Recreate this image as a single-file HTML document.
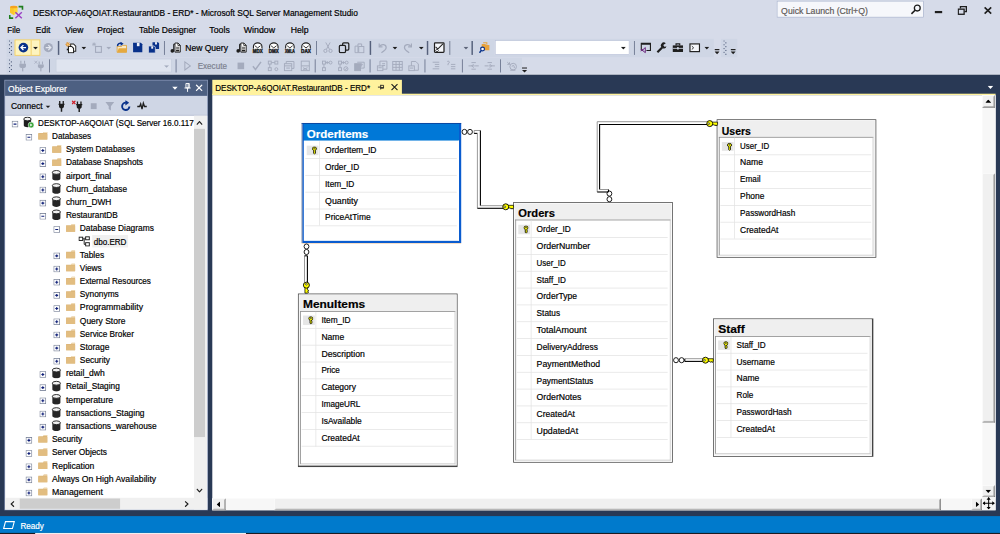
<!DOCTYPE html><html><head><meta charset="utf-8"><title>SSMS</title><style>
html,body{margin:0;padding:0;background:#d6dbe9;overflow:hidden;}
body{width:1000px;height:534px;position:relative;font-family:"Liberation Sans",sans-serif;}
#st{position:absolute;left:0;top:0;width:1366px;height:730px;transform:scale(0.732064);transform-origin:0 0;font-size:11.5px;color:#000;}
#st div,#st span,#st svg{position:absolute;box-sizing:border-box;}
.t{white-space:pre;line-height:16px;height:16px;transform-origin:0 50%;-webkit-text-stroke:0.25px currentColor;}
.b{font-weight:bold;}
</style></head><body><div id="st">
<div style="left:0.00px;top:0.00px;width:1366.00px;height:102.00px;background:#d6dbe9;"></div>
<svg style="left:12.00px;top:7.00px;" width="22" height="20" viewBox="0 0 22 20">
<path d="M1.7 2.6 V10.2 L6.8 13.4 L12 10.2 V2.6 Z" fill="#ffd633"/>
<path d="M1.7 2.6 V10.2 L6.8 13.4 V4.5 Z" fill="#fbc62a"/>
<ellipse cx="6.85" cy="2.6" rx="5.15" ry="1.7" fill="#f5a21f"/>
<path d="M13.4 2 H18.7 V6.2" fill="none" stroke="#1f7d1f" stroke-width="2.2"/>
<path d="M1.3 13.6 V17.8 H6" fill="none" stroke="#1f7d1f" stroke-width="2.2"/>
<path d="M9 9.6 L17.8 18 M17.8 9.6 L9 18" stroke="#9a3fc4" stroke-width="1.9"/>
</svg>
<span class="t" style="left:44.90px;top:10.20px;font-size:11.5px;color:#000;transform:scaleX(0.9939);">DESKTOP-A6QOIAT.RestaurantDB - ERD* - Microsoft SQL Server Management Studio</span>
<div style="left:1061.30px;top:1.40px;width:200.40px;height:22.80px;background:#f6f7fb;border:1px solid #a6b1cc;"></div>
<span class="t" style="left:1067.20px;top:6.70px;font-size:11.5px;color:#5e5a58;transform:scaleX(1.0328);">Quick Launch (Ctrl+Q)</span>
<svg style="left:1243.00px;top:5.00px;" width="16" height="16" viewBox="0 0 16 16"><circle cx="10" cy="6" r="4" fill="none" stroke="#1e1e1e" stroke-width="1.8"/><path d="M7 9 L2 14" stroke="#1e1e1e" stroke-width="2.2"/></svg>
<div style="left:1277.00px;top:14.50px;width:10.00px;height:3.00px;background:#1e1e1e;"></div>
<svg style="left:1308.00px;top:8.00px;" width="14" height="13" viewBox="0 0 14 13"><path d="M4 3.5 V1 H12 V8 H9.5" fill="none" stroke="#1e1e1e" stroke-width="1.8"/><rect x="1" y="4.5" width="8" height="7" fill="none" stroke="#1e1e1e" stroke-width="1.8"/></svg>
<svg style="left:1343.50px;top:9.00px;" width="11" height="10.5" viewBox="0 0 11 10.5"><path d="M1 1 L10 9.5 M10 1 L1 9.5" stroke="#1e1e1e" stroke-width="2.2"/></svg>
<span class="t" style="left:10.20px;top:33.10px;font-size:11.5px;color:#000;transform:scaleX(0.9536);">File</span>
<span class="t" style="left:48.50px;top:33.10px;font-size:11.5px;color:#000;transform:scaleX(0.9984);">Edit</span>
<span class="t" style="left:88.80px;top:33.10px;font-size:11.5px;color:#000;transform:scaleX(1.0077);">View</span>
<span class="t" style="left:133.20px;top:33.10px;font-size:11.5px;color:#000;transform:scaleX(1.0103);">Project</span>
<span class="t" style="left:189.90px;top:33.10px;font-size:11.5px;color:#000;transform:scaleX(1.0130);">Table Designer</span>
<span class="t" style="left:286.20px;top:33.10px;font-size:11.5px;color:#000;transform:scaleX(1.0396);">Tools</span>
<span class="t" style="left:333.30px;top:33.10px;font-size:11.5px;color:#000;transform:scaleX(1.0477);">Window</span>
<span class="t" style="left:396.80px;top:33.10px;font-size:11.5px;color:#000;transform:scaleX(1.0308);">Help</span>
<div style="left:9.00px;top:52.50px;width:966.00px;height:25.50px;background:#cfd6e5;"></div>
<div style="left:985.00px;top:52.50px;width:21.50px;height:25.50px;background:#cfd6e5;"></div>
<div style="left:9.00px;top:79.00px;width:704.00px;height:22.00px;background:#cfd6e5;"></div>
<div style="left:0.00px;top:100.60px;width:1366.00px;height:1.70px;background:#fafbfe;"></div>
<svg style="left:12.00px;top:55.00px;" width="5" height="21" viewBox="0 0 5 21"><rect x="0.2" y="0.2" width="1.5" height="1.5" fill="#4d5a78"/><rect x="2.8" y="2.8" width="1.5" height="1.5" fill="#4d5a78"/><rect x="0.2" y="5.4" width="1.5" height="1.5" fill="#4d5a78"/><rect x="2.8" y="8.0" width="1.5" height="1.5" fill="#4d5a78"/><rect x="0.2" y="10.6" width="1.5" height="1.5" fill="#4d5a78"/><rect x="2.8" y="13.2" width="1.5" height="1.5" fill="#4d5a78"/><rect x="0.2" y="15.8" width="1.5" height="1.5" fill="#4d5a78"/><rect x="2.8" y="18.4" width="1.5" height="1.5" fill="#4d5a78"/></svg>
<svg style="left:12.00px;top:80.50px;" width="5" height="19" viewBox="0 0 5 19"><rect x="0.2" y="0.2" width="1.5" height="1.5" fill="#4d5a78"/><rect x="2.8" y="2.8" width="1.5" height="1.5" fill="#4d5a78"/><rect x="0.2" y="5.4" width="1.5" height="1.5" fill="#4d5a78"/><rect x="2.8" y="8.0" width="1.5" height="1.5" fill="#4d5a78"/><rect x="0.2" y="10.6" width="1.5" height="1.5" fill="#4d5a78"/><rect x="2.8" y="13.2" width="1.5" height="1.5" fill="#4d5a78"/><rect x="0.2" y="15.8" width="1.5" height="1.5" fill="#4d5a78"/></svg>
<svg style="left:987.50px;top:55.00px;" width="5" height="21" viewBox="0 0 5 21"><rect x="0.2" y="0.2" width="1.5" height="1.5" fill="#4d5a78"/><rect x="2.8" y="2.8" width="1.5" height="1.5" fill="#4d5a78"/><rect x="0.2" y="5.4" width="1.5" height="1.5" fill="#4d5a78"/><rect x="2.8" y="8.0" width="1.5" height="1.5" fill="#4d5a78"/><rect x="0.2" y="10.6" width="1.5" height="1.5" fill="#4d5a78"/><rect x="2.8" y="13.2" width="1.5" height="1.5" fill="#4d5a78"/><rect x="0.2" y="15.8" width="1.5" height="1.5" fill="#4d5a78"/><rect x="2.8" y="18.4" width="1.5" height="1.5" fill="#4d5a78"/></svg>
<div style="left:20.20px;top:53.50px;width:34.70px;height:22.70px;background:#fdf4bf;border:1.2px solid #efc552;"></div>
<div style="left:42.00px;top:54.50px;width:1.20px;height:20.70px;background:#efc552;"></div>
<svg style="left:24.10px;top:57.00px;" width="16" height="16" viewBox="0 0 16 16"><circle cx="8" cy="8" r="6.6" fill="#08318a"/><path d="M11.6 8 H5 M8 4.6 L4.6 8 L8 11.4" fill="none" stroke="#fff" stroke-width="1.8"/></svg>
<svg style="left:45.13px;top:63.50px;" width="7" height="4.0" viewBox="0 0 7 4.0"><path d="M0 0 H7 L3.5 3.5 Z" fill="#1e1e1e"/></svg>
<svg style="left:58.25px;top:57.00px;" width="16" height="16" viewBox="0 0 16 16"><circle cx="8" cy="8" r="6.3" fill="#a4abbd"/><path d="M4.4 8 H11 M8 4.6 L11.4 8 L8 11.4" fill="none" stroke="#e3e7f0" stroke-width="1.7"/></svg>
<div style="left:79.45px;top:55.50px;width:1.20px;height:19.00px;background:#56617c;"></div>
<svg style="left:88.99px;top:57.00px;" width="16" height="16" viewBox="0 0 16 16"><path d="M7.5 3 H11.5 L14.5 6 V13 H7.5 Z" fill="#fff" stroke="#1e1e1e" stroke-width="1.4"/><path d="M4.5 6.5 H9 L11.5 9 V15 H4.5 Z" fill="#fff" stroke="#1e1e1e" stroke-width="1.4"/><path d="M3.6 0.3 V7 M0.3 3.6 H7 M1.3 1.3 L5.9 5.9 M5.9 1.3 L1.3 5.9" stroke="#e08a1e" stroke-width="1.2"/><circle cx="3.6" cy="3.6" r="1.3" fill="#f6c56a"/><rect x="2.2" y="9.5" width="2.2" height="2.2" fill="#1e1e1e"/></svg>
<svg style="left:110.83px;top:63.50px;" width="7" height="4.0" viewBox="0 0 7 4.0"><path d="M0 0 H7 L3.5 3.5 Z" fill="#1e1e1e"/></svg>
<svg style="left:125.19px;top:57.00px;" width="16" height="16" viewBox="0 0 16 16"><path d="M3.5 0.8 V6.2 M0.8 3.5 H6.2 M1.6 1.6 L5.4 5.4 M5.4 1.6 L1.6 5.4" stroke="#a4abbd" stroke-width="1"/><rect x="5.5" y="6.5" width="8" height="8" fill="none" stroke="#a4abbd" stroke-width="1.5"/></svg>
<svg style="left:145.39px;top:63.50px;" width="7" height="4.0" viewBox="0 0 7 4.0"><path d="M0 0 H7 L3.5 3.5 Z" fill="#a4abbd"/></svg>
<svg style="left:157.97px;top:57.00px;" width="16" height="16" viewBox="0 0 16 16"><path d="M2 14.5 V6.5 H8 L9.2 5 H14.8 V14.5 Z" fill="#f7e7c4" stroke="#dd9f33" stroke-width="1.1"/><path d="M2 14.5 L4.2 9 H15.8 L14.8 14.5 Z" fill="#e5a93f"/><path d="M2.6 6 C2.4 2.6 5.5 1.4 8.4 2.6" fill="none" stroke="#08318a" stroke-width="2.1"/><path d="M6.6 0 L10.8 2.9 L6.9 5.4 Z" fill="#08318a"/></svg>
<svg style="left:179.55px;top:57.00px;" width="16" height="16" viewBox="0 0 16 16"><path d="M1.8 1.5 H12.6 L14.4 3.3 V14.5 H1.8 Z" fill="#08318a"/><rect x="7" y="1.5" width="3.6" height="4.6" fill="#eef1f8"/></svg>
<svg style="left:201.82px;top:57.00px;" width="16" height="16" viewBox="0 0 16 16"><path d="M6.3 0.6 H13.8 L15.4 2.2 V10 H6.3 Z" fill="#08318a"/><rect x="9.8" y="0.6" width="2.6" height="3.2" fill="#eef1f8"/><path d="M0.8 5.8 H8.6 L10.2 7.4 V15.4 H0.8 Z" fill="#08318a" stroke="#cfd6e5" stroke-width="1.1"/><rect x="4.6" y="6.3" width="2.6" height="3.2" fill="#eef1f8"/></svg>
<div style="left:223.97px;top:55.50px;width:1.20px;height:19.00px;background:#56617c;"></div>
<svg style="left:232.42px;top:57.00px;" width="16" height="16" viewBox="0 0 16 16"><path d="M7 1.8 H11.2 L14.3 4.9 V14.2 H7 Z" fill="#fff" stroke="#1e1e1e" stroke-width="1.3"/><path d="M11 1.8 V5.1 H14.3" fill="none" stroke="#1e1e1e" stroke-width="1.1"/><path d="M8.6 7.6 H12.8 M8.6 9.6 H12.8" stroke="#1e1e1e" stroke-width="1"/><rect x="8.5" y="11" width="4.4" height="2.2" fill="#1e1e1e"/><circle cx="3.4" cy="12.6" r="2.5" fill="#1e1e1e"/><path d="M5.2 12.6 V3.4 H7" fill="none" stroke="#1e1e1e" stroke-width="1.3"/></svg>
<span class="t" style="left:252.98px;top:57.40px;font-size:11.5px;color:#000;transform:scaleX(1.0152);">New Query</span>
<svg style="left:322.44px;top:57.00px;" width="16" height="16" viewBox="0 0 16 16"><path d="M7 1.8 H11.2 L14.3 4.9 V14.2 H7 Z" fill="#fff" stroke="#1e1e1e" stroke-width="1.3"/><path d="M11 1.8 V5.1 H14.3" fill="none" stroke="#1e1e1e" stroke-width="1.1"/><path d="M8.6 7.6 H12.8 M8.6 9.6 H12.8" stroke="#1e1e1e" stroke-width="1"/><rect x="8.5" y="11" width="4.4" height="2.2" fill="#1e1e1e"/><circle cx="3.4" cy="12.6" r="2.5" fill="#1e1e1e"/><path d="M5.2 12.6 V3.4 H7" fill="none" stroke="#1e1e1e" stroke-width="1.3"/></svg>
<svg style="left:344.09px;top:57.00px;" width="16" height="16" viewBox="0 0 16 16"><path d="M2.2 9.3 V6.5 C2.2 3.5 5 1.6 8 1.6 C11 1.6 13.8 3.5 13.8 6.5 V9.3" fill="#fff" stroke="#1e1e1e" stroke-width="1.5"/><path d="M3 9.3 H13" stroke="#fff" stroke-width="1.5"/><path d="M4.3 5.6 L8 8.4 L11.7 5.6" fill="#fff" stroke="#1e1e1e" stroke-width="1.2"/><text x="8" y="15.3" font-family="Liberation Sans" font-size="6.6" font-weight="bold" text-anchor="middle" fill="#1e1e1e" stroke="#1e1e1e" stroke-width="0.55" textLength="13.5" lengthAdjust="spacingAndGlyphs">MDX</text></svg>
<svg style="left:366.28px;top:57.00px;" width="16" height="16" viewBox="0 0 16 16"><path d="M2.2 9.3 V6.5 C2.2 3.5 5 1.6 8 1.6 C11 1.6 13.8 3.5 13.8 6.5 V9.3" fill="#fff" stroke="#1e1e1e" stroke-width="1.5"/><path d="M3 9.3 H13" stroke="#fff" stroke-width="1.5"/><path d="M4.3 5.6 L8 8.4 L11.7 5.6" fill="#fff" stroke="#1e1e1e" stroke-width="1.2"/><text x="8" y="15.3" font-family="Liberation Sans" font-size="6.6" font-weight="bold" text-anchor="middle" fill="#1e1e1e" stroke="#1e1e1e" stroke-width="0.55" textLength="13.5" lengthAdjust="spacingAndGlyphs">DMX</text></svg>
<svg style="left:388.48px;top:57.00px;" width="16" height="16" viewBox="0 0 16 16"><path d="M2.2 9.3 V6.5 C2.2 3.5 5 1.6 8 1.6 C11 1.6 13.8 3.5 13.8 6.5 V9.3" fill="#fff" stroke="#1e1e1e" stroke-width="1.5"/><path d="M3 9.3 H13" stroke="#fff" stroke-width="1.5"/><path d="M4.3 5.6 L8 8.4 L11.7 5.6" fill="#fff" stroke="#1e1e1e" stroke-width="1.2"/><text x="8" y="15.3" font-family="Liberation Sans" font-size="6.6" font-weight="bold" text-anchor="middle" fill="#1e1e1e" stroke="#1e1e1e" stroke-width="0.55" textLength="13.5" lengthAdjust="spacingAndGlyphs">XMLA</text></svg>
<svg style="left:410.00px;top:57.00px;" width="16" height="16" viewBox="0 0 16 16"><path d="M2.2 9.3 V6.5 C2.2 3.5 5 1.6 8 1.6 C11 1.6 13.8 3.5 13.8 6.5 V9.3" fill="#fff" stroke="#1e1e1e" stroke-width="1.5"/><path d="M3 9.3 H13" stroke="#fff" stroke-width="1.5"/><path d="M4.3 5.6 L8 8.4 L11.7 5.6" fill="#fff" stroke="#1e1e1e" stroke-width="1.2"/><text x="8" y="15.3" font-family="Liberation Sans" font-size="6.6" font-weight="bold" text-anchor="middle" fill="#1e1e1e" stroke="#1e1e1e" stroke-width="0.55" textLength="13.5" lengthAdjust="spacingAndGlyphs">DAX</text></svg>
<div style="left:431.88px;top:55.50px;width:1.20px;height:19.00px;background:#56617c;"></div>
<svg style="left:440.05px;top:57.00px;" width="16" height="16" viewBox="0 0 16 16"><path d="M5 1 L10.2 10.5 M11 1 L5.8 10.5" stroke="#a4abbd" stroke-width="1.3" fill="none"/><circle cx="4.5" cy="12.5" r="2.2" fill="none" stroke="#a4abbd" stroke-width="1.3"/><circle cx="11.5" cy="12.5" r="2.2" fill="none" stroke="#a4abbd" stroke-width="1.3"/></svg>
<svg style="left:462.45px;top:57.00px;" width="16" height="16" viewBox="0 0 16 16"><rect x="6" y="1.5" width="8.5" height="10" rx="1.5" fill="none" stroke="#1e1e1e" stroke-width="1.7"/><rect x="1.5" y="5" width="8.5" height="10" rx="1.5" fill="#cfd6e5" stroke="#1e1e1e" stroke-width="1.7"/></svg>
<svg style="left:482.94px;top:57.00px;" width="16" height="16" viewBox="0 0 16 16"><path d="M2 6 H6 V15 H2 Z M6 6 V3 H11 V6" fill="none" stroke="#a4abbd" stroke-width="1.3"/><rect x="7" y="6.5" width="7" height="8.5" fill="none" stroke="#a4abbd" stroke-width="1.3"/></svg>
<div style="left:505.37px;top:55.50px;width:1.20px;height:19.00px;background:#56617c;"></div>
<svg style="left:514.50px;top:57.00px;" width="16" height="16" viewBox="0 0 16 16"><path d="M3 2.5 V7 H7.5" fill="none" stroke="#a4abbd" stroke-width="1.6"/><path d="M3.5 6.5 C6 2.5 12.5 3 12.5 8 C12.5 11 9.5 13 6 15" fill="none" stroke="#a4abbd" stroke-width="1.7"/></svg>
<svg style="left:536.41px;top:63.50px;" width="7" height="4.0" viewBox="0 0 7 4.0"><path d="M0 0 H7 L3.5 3.5 Z" fill="#1e1e1e"/></svg>
<svg style="left:549.33px;top:57.00px;" width="16" height="16" viewBox="0 0 16 16"><path d="M13 2.5 V7 H8.5" fill="none" stroke="#a4abbd" stroke-width="1.6"/><path d="M12.5 6.5 C10 2.5 3.5 3 3.5 8 C3.5 11 6.5 13 10 15" fill="none" stroke="#a4abbd" stroke-width="1.7"/></svg>
<svg style="left:571.59px;top:63.50px;" width="7" height="4.0" viewBox="0 0 7 4.0"><path d="M0 0 H7 L3.5 3.5 Z" fill="#1e1e1e"/></svg>
<div style="left:583.37px;top:55.50px;width:1.20px;height:19.00px;background:#56617c;"></div>
<svg style="left:592.22px;top:57.00px;" width="16" height="16" viewBox="0 0 16 16"><rect x="1.5" y="1.5" width="13" height="13" rx="1" fill="#f4f6fa" stroke="#1e1e1e" stroke-width="1.7"/><path d="M3 7 L6 10 L13 3" fill="none" stroke="#1e1e1e" stroke-width="1.4"/><path d="M3 12 L5 10 L7 12 L5 14 Z" fill="none" stroke="#1e1e1e" stroke-width="1"/></svg>
<div style="left:613.55px;top:55.50px;width:1.20px;height:19.00px;background:#56617c;"></div>
<svg style="left:632.51px;top:63.50px;" width="7" height="4.0" viewBox="0 0 7 4.0"><path d="M0 0 H7 L3.5 3.5 Z" fill="#5d6579"/></svg>
<div style="left:644.49px;top:55.50px;width:1.20px;height:19.00px;background:#56617c;"></div>
<svg style="left:653.69px;top:57.00px;" width="16" height="16" viewBox="0 0 16 16"><path d="M4 3 H9 L10 4.5 H14.5 V11.5 H4 Z" fill="#e8a33d"/><path d="M6 1.5 H11 V4" fill="none" stroke="#e8a33d" stroke-width="1.4"/><circle cx="5.2" cy="10" r="2.6" fill="#fff" stroke="#08318a" stroke-width="1.6"/><path d="M3.4 12 L1 15" stroke="#08318a" stroke-width="1.9"/></svg>
<div style="left:675.83px;top:54.50px;width:183.80px;height:20.97px;background:#fff;border:1px solid #b8c1d8;"></div>
<svg style="left:848.20px;top:63.50px;" width="7" height="4.0" viewBox="0 0 7 4.0"><path d="M0 0 H7 L3.5 3.5 Z" fill="#1e1e1e"/></svg>
<div style="left:865.99px;top:55.50px;width:1.20px;height:19.00px;background:#56617c;"></div>
<svg style="left:874.44px;top:57.00px;" width="16" height="16" viewBox="0 0 16 16"><path d="M2 12 V2 H14.5 V12 H9" fill="none" stroke="#1e1e1e" stroke-width="1.5"/><path d="M2 3 H14.5" stroke="#1e1e1e" stroke-width="2.4"/><path d="M7.5 8 L3.5 11.5 L7.5 15 V8 Z M1.5 10 L4.5 13 M1.5 13 L4.5 10" fill="none" stroke="#68217a" stroke-width="1.3"/></svg>
<svg style="left:896.29px;top:57.00px;" width="16" height="16" viewBox="0 0 16 16"><path d="M2 14.5 L8.5 8" stroke="#1e1e1e" stroke-width="3"/><path d="M13.5 2 A4 4 0 1 0 14.5 6.5 L11.5 7 L10 4.5 Z" fill="#1e1e1e"/></svg>
<svg style="left:918.15px;top:57.00px;" width="16" height="16" viewBox="0 0 16 16"><path d="M5.5 5 V3 H10.5 V5" fill="none" stroke="#1e1e1e" stroke-width="1.6"/><rect x="1" y="5" width="14" height="9" fill="#1e1e1e"/><rect x="1" y="8.4" width="14" height="1.2" fill="#cfd6e5"/><rect x="6.8" y="7.4" width="2.4" height="3.2" fill="#cfd6e5"/></svg>
<svg style="left:940.55px;top:57.00px;" width="16" height="16" viewBox="0 0 16 16"><rect x="1.5" y="3" width="13" height="10.5" fill="#f4f6fa" stroke="#1e1e1e" stroke-width="1.6"/><path d="M4 6 L6.5 8.3 L4 10.6" fill="none" stroke="#1e1e1e" stroke-width="1.2"/></svg>
<svg style="left:962.13px;top:63.50px;" width="7" height="4.0" viewBox="0 0 7 4.0"><path d="M0 0 H7 L3.5 3.5 Z" fill="#1e1e1e"/></svg>
<svg style="left:975.65px;top:67.00px;" width="7" height="8" viewBox="0 0 7 8"><rect x="0" y="0" width="7" height="1.6" fill="#1e1e1e"/><path d="M0 3.5 H7 L3.5 7 Z" fill="#1e1e1e"/></svg>
<svg style="left:997.78px;top:67.00px;" width="7" height="8" viewBox="0 0 7 8"><rect x="0" y="0" width="7" height="1.6" fill="#1e1e1e"/><path d="M0 3.5 H7 L3.5 7 Z" fill="#1e1e1e"/></svg>
<svg style="left:22.87px;top:81.50px;" width="16" height="16" viewBox="0 0 16 16"><path d="M5.5 1 V5 M10.5 1 V5" stroke="#a4abbd" stroke-width="1.5"/><path d="M3.5 5 H12.5 V8 C12.5 10 10.5 11 8 11 C5.5 11 3.5 10 3.5 8 Z" fill="#a4abbd"/><path d="M8 11 V15.5" stroke="#a4abbd" stroke-width="1.7"/></svg>
<svg style="left:45.96px;top:81.50px;" width="16" height="16" viewBox="0 0 16 16"><path d="M1 1 L5 5 M5 1 L1 5" stroke="#a4abbd" stroke-width="1"/><path d="M7.5 2 V6 M12 2 V6" stroke="#a4abbd" stroke-width="1.4"/><path d="M5.8 6 H13.8 V8.5 C13.8 10.5 12 11.3 9.8 11.3 C7.6 11.3 5.8 10.5 5.8 8.5 Z" fill="#a4abbd"/><path d="M9.8 11 V15.5" stroke="#a4abbd" stroke-width="1.6"/></svg>
<div style="left:67.15px;top:80.50px;width:1.20px;height:18.00px;background:#56617c;"></div>
<div style="left:76.22px;top:80.05px;width:158.59px;height:19.33px;background:#dfe4ef;border:1px solid #c3cbdc;"></div>
<svg style="left:224.49px;top:88.50px;" width="7" height="4.0" viewBox="0 0 7 4.0"><path d="M0 0 H7 L3.5 3.5 Z" fill="#a4abbd"/></svg>
<div style="left:240.16px;top:80.50px;width:1.20px;height:18.00px;background:#56617c;"></div>
<svg style="left:248.12px;top:81.50px;" width="16" height="16" viewBox="0 0 16 16"><path d="M4.5 2.5 L12 8 L4.5 13.5 Z" fill="none" stroke="#a4abbd" stroke-width="1.4"/></svg>
<span class="t" style="left:269.92px;top:82.20px;font-size:11.5px;color:#7c818f;transform:scaleX(0.9605);">Execute</span>
<svg style="left:321.21px;top:81.50px;" width="16" height="16" viewBox="0 0 16 16"><rect x="3.5" y="3.5" width="9" height="9" fill="#a4abbd"/></svg>
<svg style="left:342.93px;top:81.50px;" width="16" height="16" viewBox="0 0 16 16"><path d="M2.5 8.5 L6 13 L13.5 2.5" fill="none" stroke="#a4abbd" stroke-width="2"/></svg>
<svg style="left:365.05px;top:81.50px;" width="16" height="16" viewBox="0 0 16 16"><g fill="none" stroke="#a4abbd" stroke-width="1.3"><rect x="1.5" y="1.5" width="4" height="4"/><rect x="10.5" y="1.5" width="4" height="4"/><rect x="1.5" y="10.5" width="4" height="4"/><circle cx="12.5" cy="12.5" r="2"/><path d="M5.5 3.5 H10.5 M3.5 5.5 V10.5"/></g></svg>
<svg style="left:386.77px;top:81.50px;" width="16" height="16" viewBox="0 0 16 16"><g fill="none" stroke="#a4abbd" stroke-width="1.3"><rect x="1.5" y="5" width="10" height="9.5"/><path d="M4 5 V2 H14.5 V11.5 H11.5 M1.5 8 H11.5 M4 11 H9"/></g></svg>
<svg style="left:408.63px;top:81.50px;" width="16" height="16" viewBox="0 0 16 16"><g fill="none" stroke="#a4abbd" stroke-width="1.3"><rect x="2.5" y="1.5" width="11" height="13"/><path d="M2.5 8 H13.5 M5 10.5 L11 13.5 M11 10.5 L5 13.5"/></g></svg>
<div style="left:430.03px;top:80.50px;width:1.20px;height:18.00px;background:#56617c;"></div>
<svg style="left:439.02px;top:81.50px;" width="16" height="16" viewBox="0 0 16 16"><g fill="none" stroke="#a4abbd" stroke-width="1.3"><rect x="1.5" y="1.5" width="4" height="4"/><circle cx="12.5" cy="3.5" r="2"/><rect x="1.5" y="10.5" width="4" height="4"/><path d="M5.5 3.5 H10.5 M3.5 5.5 V10.5 M8 1.5 V5.5"/></g></svg>
<svg style="left:460.67px;top:81.50px;" width="16" height="16" viewBox="0 0 16 16"><g fill="none" stroke="#a4abbd" stroke-width="1.3"><rect x="1.5" y="1.5" width="4" height="4"/><circle cx="12.5" cy="3.5" r="2"/><rect x="1.5" y="10.5" width="4" height="4"/><path d="M5.5 3.5 H10.5 M3.5 5.5 V10.5 M8 1.5 V5.5"/><circle cx="11.5" cy="12" r="2.8"/><path d="M10.3 12 L11.3 13 L13 11"/></g></svg>
<svg style="left:482.94px;top:81.50px;" width="16" height="16" viewBox="0 0 16 16"><g fill="none" stroke="#a4abbd" stroke-width="1.3"><rect x="1.5" y="5" width="8" height="9.5" fill="#a4abbd"/><path d="M5 3 H14.5 V11 H9.5 M11 5 V9 M11 5 L9.5 6.5 M11 5 L12.5 6.5"/></g></svg>
<div style="left:504.82px;top:80.50px;width:1.20px;height:18.00px;background:#56617c;"></div>
<svg style="left:513.68px;top:81.50px;" width="16" height="16" viewBox="0 0 16 16"><g fill="none" stroke="#a4abbd" stroke-width="1.3"><path d="M5 8 V1.5 H14.5 V12.5 H9"/><rect x="1.5" y="8" width="7.5" height="6.5"/><path d="M3 10.5 H7.5 M8 5 H12 M8 7.5 H12"/></g></svg>
<svg style="left:534.64px;top:81.50px;" width="16" height="16" viewBox="0 0 16 16"><g fill="none" stroke="#a4abbd" stroke-width="1.3"><rect x="1.5" y="2" width="13" height="12"/><path d="M1.5 6 H14.5 M1.5 10 H14.5 M6 2 V14 M10.5 2 V14"/></g></svg>
<svg style="left:557.18px;top:81.50px;" width="16" height="16" viewBox="0 0 16 16"><g fill="none" stroke="#a4abbd" stroke-width="1.3"><path d="M5 8 V2 H11 L14.5 5.5 V14 H9"/><rect x="1.5" y="8" width="7.5" height="6.5"/><path d="M3 11 H7.5"/></g></svg>
<div style="left:579.61px;top:80.50px;width:1.20px;height:18.00px;background:#56617c;"></div>
<svg style="left:587.03px;top:81.50px;" width="16" height="16" viewBox="0 0 16 16"><g fill="none" stroke="#a4abbd" stroke-width="1.3"><path d="M4 3 H13 M7 6 H13 M7 9 H13 M4 12 H13"/></g></svg>
<svg style="left:609.30px;top:81.50px;" width="16" height="16" viewBox="0 0 16 16"><g fill="none" stroke="#a4abbd" stroke-width="1.3"><path d="M7 6 H13 M7 9 H13 M7 12 H13 M2 2 C5 0.5 6 4 3 5 V7"/></g></svg>
<div style="left:631.18px;top:80.50px;width:1.20px;height:18.00px;background:#56617c;"></div>
<svg style="left:639.14px;top:81.50px;" width="16" height="16" viewBox="0 0 16 16"><g fill="none" stroke="#a4abbd" stroke-width="1.3"><path d="M1 8 H6 M10 8 H15 M9.5 8 H5.5 M8 5.5 L5.5 8 L8 10.5 M5 3.5 H11 M5 12.5 H11"/></g></svg>
<svg style="left:660.52px;top:81.50px;" width="16" height="16" viewBox="0 0 16 16"><g fill="none" stroke="#a4abbd" stroke-width="1.3"><path d="M1 8 H6 M10 8 H15 M6.5 8 H10.5 M8 5.5 L10.5 8 L8 10.5 M5 3.5 H11 M5 12.5 H11"/></g></svg>
<div style="left:683.22px;top:80.50px;width:1.20px;height:18.00px;background:#56617c;"></div>
<svg style="left:691.26px;top:81.50px;" width="16" height="16" viewBox="0 0 16 16"><g fill="none" stroke="#a4abbd" stroke-width="1.3"><path d="M2 3 L5 6 M5 3 V6 H2"/><circle cx="10" cy="9" r="4.5"/><path d="M8.5 9 A1.5 1.5 0 1 1 11.5 9 V11 M6 14 H13"/></g></svg>
<svg style="left:712.83px;top:91.50px;" width="7" height="8" viewBox="0 0 7 8"><rect x="0" y="0" width="7" height="1.6" fill="#1e1e1e"/><path d="M0 3.5 H7 L3.5 7 Z" fill="#1e1e1e"/></svg>
<div style="left:0.00px;top:102.00px;width:1366.00px;height:628.00px;background:#293955;"></div>
<div style="left:0.00px;top:705.00px;width:1366.00px;height:23.20px;background:#007acc;"></div>
<svg style="left:3.60px;top:711.20px;" width="17" height="13" viewBox="0 0 17 13"><path d="M3.5 1.5 H15.5 L13 11 H1 Z" fill="none" stroke="#fff" stroke-width="1.5"/></svg>
<span class="t" style="left:27.50px;top:709.70px;font-size:11.5px;color:#fff;transform:scaleX(0.9604);">Ready</span>
<div style="left:0.00px;top:728.20px;width:1366.00px;height:2.00px;background:#1b1b22;"></div>
<div style="left:48.00px;top:728.20px;width:288.00px;height:2.00px;background:#f0f0f0;"></div>
<div style="left:5.74px;top:108.73px;width:278.39px;height:588.47px;background:#8e9bbc;"></div>
<div style="left:6.74px;top:109.73px;width:276.39px;height:20.99px;background:#4d6082;"></div>
<span class="t" style="left:11.34px;top:113.05px;font-size:11.5px;color:#fff;transform:scaleX(1.0111);">Object Explorer</span>
<svg style="left:235.32px;top:117.66px;" width="8" height="5" viewBox="0 0 8 5"><path d="M0 0 H8 L4 4.5 Z" fill="#fff"/></svg>
<svg style="left:250.58px;top:113.16px;" width="10" height="13" viewBox="0 0 10 13"><path d="M3 1 H7.5 V7 H3 Z M6 1 V7" fill="none" stroke="#fff" stroke-width="1.3"/><path d="M1 7.2 H9.5 M5.2 7.2 V12.5" stroke="#fff" stroke-width="1.3"/></svg>
<svg style="left:267.24px;top:114.66px;" width="10" height="10" viewBox="0 0 10 10"><path d="M0.8 0.8 L9.2 9.2 M9.2 0.8 L0.8 9.2" stroke="#fff" stroke-width="1.6"/></svg>
<div style="left:6.74px;top:130.73px;width:276.39px;height:26.77px;background:#cfd6e5;"></div>
<div style="left:6.74px;top:156.50px;width:276.39px;height:1.00px;background:#b9c2d6;"></div>
<span class="t" style="left:14.62px;top:136.68px;font-size:11.5px;color:#000;transform:scaleX(1.0101);">Connect</span>
<svg style="left:61.66px;top:143.52px;" width="7" height="4.0" viewBox="0 0 7 4.0"><path d="M0 0 H7 L3.5 3.5 Z" fill="#1e1e1e"/></svg>
<svg style="left:76.01px;top:136.52px;" width="16" height="16" viewBox="0 0 16 16"><path d="M5.6 1 V5 M10.4 1 V5" stroke="#1e1e1e" stroke-width="1.8"/><path d="M3.8 4.6 H12.2 V6.2 H11.4 V8.2 C11.4 10 10 11 8 11 C6 11 4.6 10 4.6 8.2 V6.2 H3.8 Z" fill="#1e1e1e"/><path d="M8 10.5 V15.5" stroke="#1e1e1e" stroke-width="2"/></svg>
<svg style="left:98.27px;top:136.52px;" width="16" height="16" viewBox="0 0 16 16"><path d="M0.3 0.6 L5 5.3 M5 0.6 L0.3 5.3" stroke="#d0202a" stroke-width="1.7"/><g transform="translate(2.2,0.5)"><path d="M5.6 1 V5 M10.4 1 V5" stroke="#1e1e1e" stroke-width="1.8"/><path d="M3.8 4.6 H12.2 V6.2 H11.4 V8.2 C11.4 10 10 11 8 11 C6 11 4.6 10 4.6 8.2 V6.2 H3.8 Z" fill="#1e1e1e"/><path d="M8 10.5 V15.5" stroke="#1e1e1e" stroke-width="2"/></g></svg>
<svg style="left:119.72px;top:136.52px;" width="16" height="16" viewBox="0 0 16 16"><rect x="4" y="4" width="8" height="8" fill="#a4abbd"/></svg>
<svg style="left:141.99px;top:136.52px;" width="16" height="16" viewBox="0 0 16 16"><path d="M2 2.5 H14 L9.5 8 V14 L6.5 12 V8 Z" fill="#a4abbd"/></svg>
<svg style="left:163.57px;top:136.52px;" width="16" height="16" viewBox="0 0 16 16"><path d="M12.8 8.5 A5 5 0 1 1 8 3.2" fill="none" stroke="#08318a" stroke-width="2.6"/><path d="M7.3 -0.4 L12.4 3.3 L7.3 7 Z" fill="#08318a"/></svg>
<svg style="left:185.97px;top:136.52px;" width="16" height="16" viewBox="0 0 16 16"><path d="M1.5 8.5 H4.8 L6.2 5 L8 12 L9.8 4 L11.4 8.5 H14.5" fill="none" stroke="#1e1e1e" stroke-width="1.8"/></svg>
<div style="left:6.74px;top:157.50px;width:276.39px;height:538.71px;background:#fff;"></div>
<svg style="left:16.00px;top:165.10px;" width="9" height="9" viewBox="0 0 9 9"><rect x="0.5" y="0.5" width="8" height="8" fill="#fff" stroke="#717b92" stroke-width="1.1"/><path d="M2.5 4.5 H6.5" stroke="#0f1f78" stroke-width="1.5"/></svg>
<svg style="left:31.30px;top:159.10px;" width="16" height="16" viewBox="0 0 16 16"><path d="M1.5 3.5 V12.5 C1.5 15.5 11.5 15.5 11.5 12.5 V3.5 Z" fill="#1e1e1e"/><ellipse cx="6.5" cy="3.6" rx="5" ry="2.5" fill="#f1f1f1" stroke="#1e1e1e" stroke-width="1.3"/><circle cx="11.5" cy="11.8" r="4" fill="#3aa33a" stroke="#fff" stroke-width="0.8"/><path d="M10.3 9.8 L13.3 11.8 L10.3 13.8 Z" fill="#fff"/></svg>
<span class="t" style="left:51.60px;top:159.60px;font-size:11.5px;color:#000;transform:scaleX(0.9610);">DESKTOP-A6QOIAT (SQL Server 16.0.117</span>
<svg style="left:35.00px;top:183.10px;" width="9" height="9" viewBox="0 0 9 9"><rect x="0.5" y="0.5" width="8" height="8" fill="#fff" stroke="#717b92" stroke-width="1.1"/><path d="M2.5 4.5 H6.5" stroke="#0f1f78" stroke-width="1.5"/></svg>
<svg style="left:50.30px;top:177.10px;" width="16" height="16" viewBox="0 0 16 16"><path d="M2.3 4.8 H8.7 L10 3.2 H14.6 V13.6 H2.3 Z" fill="#dcb67a"/><path d="M2.3 5.8 H14.6 V13.6 H2.3 Z" fill="#e2bd80"/><path d="M9.6 3.4 H14.4 V4.6 H8.8 Z" fill="#f3e0bd"/></svg>
<span class="t" style="left:70.60px;top:177.60px;font-size:11.5px;color:#000;transform:scaleX(0.9729);">Databases</span>
<svg style="left:54.00px;top:201.10px;" width="9" height="9" viewBox="0 0 9 9"><rect x="0.5" y="0.5" width="8" height="8" fill="#fff" stroke="#717b92" stroke-width="1.1"/><path d="M2.5 4.5 H6.5" stroke="#0f1f78" stroke-width="1.5"/><path d="M4.5 2.5 V6.5" stroke="#0f1f78" stroke-width="1.5"/></svg>
<svg style="left:69.30px;top:195.10px;" width="16" height="16" viewBox="0 0 16 16"><path d="M2.3 4.8 H8.7 L10 3.2 H14.6 V13.6 H2.3 Z" fill="#dcb67a"/><path d="M2.3 5.8 H14.6 V13.6 H2.3 Z" fill="#e2bd80"/><path d="M9.6 3.4 H14.4 V4.6 H8.8 Z" fill="#f3e0bd"/></svg>
<span class="t" style="left:89.60px;top:195.60px;font-size:11.5px;color:#000;transform:scaleX(0.9753);">System Databases</span>
<svg style="left:54.00px;top:219.10px;" width="9" height="9" viewBox="0 0 9 9"><rect x="0.5" y="0.5" width="8" height="8" fill="#fff" stroke="#717b92" stroke-width="1.1"/><path d="M2.5 4.5 H6.5" stroke="#0f1f78" stroke-width="1.5"/><path d="M4.5 2.5 V6.5" stroke="#0f1f78" stroke-width="1.5"/></svg>
<svg style="left:69.30px;top:213.10px;" width="16" height="16" viewBox="0 0 16 16"><path d="M2.3 4.8 H8.7 L10 3.2 H14.6 V13.6 H2.3 Z" fill="#dcb67a"/><path d="M2.3 5.8 H14.6 V13.6 H2.3 Z" fill="#e2bd80"/><path d="M9.6 3.4 H14.4 V4.6 H8.8 Z" fill="#f3e0bd"/></svg>
<span class="t" style="left:89.60px;top:213.60px;font-size:11.5px;color:#000;transform:scaleX(0.9861);">Database Snapshots</span>
<svg style="left:54.00px;top:237.10px;" width="9" height="9" viewBox="0 0 9 9"><rect x="0.5" y="0.5" width="8" height="8" fill="#fff" stroke="#717b92" stroke-width="1.1"/><path d="M2.5 4.5 H6.5" stroke="#0f1f78" stroke-width="1.5"/><path d="M4.5 2.5 V6.5" stroke="#0f1f78" stroke-width="1.5"/></svg>
<svg style="left:69.30px;top:231.10px;" width="16" height="16" viewBox="0 0 16 16"><g transform="translate(0,0.9)"><path d="M2.5 3.5 V12.3 C2.5 15.6 13.5 15.6 13.5 12.3 V3.5 Z" fill="#262626"/><ellipse cx="8" cy="3.6" rx="5.5" ry="2.6" fill="#f1f1f1" stroke="#262626" stroke-width="1.3"/></g></svg>
<span class="t" style="left:89.60px;top:231.60px;font-size:11.5px;color:#000;transform:scaleX(1.0319);">airport_final</span>
<svg style="left:54.00px;top:255.10px;" width="9" height="9" viewBox="0 0 9 9"><rect x="0.5" y="0.5" width="8" height="8" fill="#fff" stroke="#717b92" stroke-width="1.1"/><path d="M2.5 4.5 H6.5" stroke="#0f1f78" stroke-width="1.5"/><path d="M4.5 2.5 V6.5" stroke="#0f1f78" stroke-width="1.5"/></svg>
<svg style="left:69.30px;top:249.10px;" width="16" height="16" viewBox="0 0 16 16"><g transform="translate(0,0.9)"><path d="M2.5 3.5 V12.3 C2.5 15.6 13.5 15.6 13.5 12.3 V3.5 Z" fill="#262626"/><ellipse cx="8" cy="3.6" rx="5.5" ry="2.6" fill="#f1f1f1" stroke="#262626" stroke-width="1.3"/></g></svg>
<span class="t" style="left:89.60px;top:249.60px;font-size:11.5px;color:#000;transform:scaleX(0.9824);">Churn_database</span>
<svg style="left:54.00px;top:273.10px;" width="9" height="9" viewBox="0 0 9 9"><rect x="0.5" y="0.5" width="8" height="8" fill="#fff" stroke="#717b92" stroke-width="1.1"/><path d="M2.5 4.5 H6.5" stroke="#0f1f78" stroke-width="1.5"/><path d="M4.5 2.5 V6.5" stroke="#0f1f78" stroke-width="1.5"/></svg>
<svg style="left:69.30px;top:267.10px;" width="16" height="16" viewBox="0 0 16 16"><g transform="translate(0,0.9)"><path d="M2.5 3.5 V12.3 C2.5 15.6 13.5 15.6 13.5 12.3 V3.5 Z" fill="#262626"/><ellipse cx="8" cy="3.6" rx="5.5" ry="2.6" fill="#f1f1f1" stroke="#262626" stroke-width="1.3"/></g></svg>
<span class="t" style="left:89.60px;top:267.60px;font-size:11.5px;color:#000;transform:scaleX(0.9917);">churn_DWH</span>
<svg style="left:54.00px;top:291.10px;" width="9" height="9" viewBox="0 0 9 9"><rect x="0.5" y="0.5" width="8" height="8" fill="#fff" stroke="#717b92" stroke-width="1.1"/><path d="M2.5 4.5 H6.5" stroke="#0f1f78" stroke-width="1.5"/></svg>
<svg style="left:69.30px;top:285.10px;" width="16" height="16" viewBox="0 0 16 16"><g transform="translate(0,0.9)"><path d="M2.5 3.5 V12.3 C2.5 15.6 13.5 15.6 13.5 12.3 V3.5 Z" fill="#262626"/><ellipse cx="8" cy="3.6" rx="5.5" ry="2.6" fill="#f1f1f1" stroke="#262626" stroke-width="1.3"/></g></svg>
<span class="t" style="left:89.60px;top:285.60px;font-size:11.5px;color:#000;transform:scaleX(0.9809);">RestaurantDB</span>
<svg style="left:73.00px;top:309.10px;" width="9" height="9" viewBox="0 0 9 9"><rect x="0.5" y="0.5" width="8" height="8" fill="#fff" stroke="#717b92" stroke-width="1.1"/><path d="M2.5 4.5 H6.5" stroke="#0f1f78" stroke-width="1.5"/></svg>
<svg style="left:88.30px;top:303.10px;" width="16" height="16" viewBox="0 0 16 16"><path d="M2.3 4.8 H8.7 L10 3.2 H14.6 V13.6 H2.3 Z" fill="#dcb67a"/><path d="M2.3 5.8 H14.6 V13.6 H2.3 Z" fill="#e2bd80"/><path d="M9.6 3.4 H14.4 V4.6 H8.8 Z" fill="#f3e0bd"/></svg>
<span class="t" style="left:108.60px;top:303.60px;font-size:11.5px;color:#000;transform:scaleX(0.9954);">Database Diagrams</span>
<svg style="left:107.30px;top:321.10px;" width="16" height="16" viewBox="0 0 16 16"><g transform="translate(0,1)" fill="none" stroke="#1e1e1e" stroke-width="1.3"><rect x="1" y="2" width="5" height="4.5"/><rect x="10" y="1.5" width="5" height="4"/><rect x="10" y="9.5" width="5" height="4.5"/><path d="M6 4.2 H8 V11.8 H10 M8 3.5 H10"/></g></svg>
<div style="left:125.70px;top:320.60px;width:49.50px;height:17.00px;background:#f0f0f0;"></div>
<span class="t" style="left:127.60px;top:321.60px;font-size:11.5px;color:#000;transform:scaleX(0.9582);">dbo.ERD</span>
<svg style="left:73.00px;top:345.10px;" width="9" height="9" viewBox="0 0 9 9"><rect x="0.5" y="0.5" width="8" height="8" fill="#fff" stroke="#717b92" stroke-width="1.1"/><path d="M2.5 4.5 H6.5" stroke="#0f1f78" stroke-width="1.5"/><path d="M4.5 2.5 V6.5" stroke="#0f1f78" stroke-width="1.5"/></svg>
<svg style="left:88.30px;top:339.10px;" width="16" height="16" viewBox="0 0 16 16"><path d="M2.3 4.8 H8.7 L10 3.2 H14.6 V13.6 H2.3 Z" fill="#dcb67a"/><path d="M2.3 5.8 H14.6 V13.6 H2.3 Z" fill="#e2bd80"/><path d="M9.6 3.4 H14.4 V4.6 H8.8 Z" fill="#f3e0bd"/></svg>
<span class="t" style="left:108.60px;top:339.60px;font-size:11.5px;color:#000;transform:scaleX(0.9989);">Tables</span>
<svg style="left:73.00px;top:363.10px;" width="9" height="9" viewBox="0 0 9 9"><rect x="0.5" y="0.5" width="8" height="8" fill="#fff" stroke="#717b92" stroke-width="1.1"/><path d="M2.5 4.5 H6.5" stroke="#0f1f78" stroke-width="1.5"/><path d="M4.5 2.5 V6.5" stroke="#0f1f78" stroke-width="1.5"/></svg>
<svg style="left:88.30px;top:357.10px;" width="16" height="16" viewBox="0 0 16 16"><path d="M2.3 4.8 H8.7 L10 3.2 H14.6 V13.6 H2.3 Z" fill="#dcb67a"/><path d="M2.3 5.8 H14.6 V13.6 H2.3 Z" fill="#e2bd80"/><path d="M9.6 3.4 H14.4 V4.6 H8.8 Z" fill="#f3e0bd"/></svg>
<span class="t" style="left:108.60px;top:357.60px;font-size:11.5px;color:#000;transform:scaleX(0.9822);">Views</span>
<svg style="left:73.00px;top:381.10px;" width="9" height="9" viewBox="0 0 9 9"><rect x="0.5" y="0.5" width="8" height="8" fill="#fff" stroke="#717b92" stroke-width="1.1"/><path d="M2.5 4.5 H6.5" stroke="#0f1f78" stroke-width="1.5"/><path d="M4.5 2.5 V6.5" stroke="#0f1f78" stroke-width="1.5"/></svg>
<svg style="left:88.30px;top:375.10px;" width="16" height="16" viewBox="0 0 16 16"><path d="M2.3 4.8 H8.7 L10 3.2 H14.6 V13.6 H2.3 Z" fill="#dcb67a"/><path d="M2.3 5.8 H14.6 V13.6 H2.3 Z" fill="#e2bd80"/><path d="M9.6 3.4 H14.4 V4.6 H8.8 Z" fill="#f3e0bd"/></svg>
<span class="t" style="left:108.60px;top:375.60px;font-size:11.5px;color:#000;transform:scaleX(0.9680);">External Resources</span>
<svg style="left:73.00px;top:399.10px;" width="9" height="9" viewBox="0 0 9 9"><rect x="0.5" y="0.5" width="8" height="8" fill="#fff" stroke="#717b92" stroke-width="1.1"/><path d="M2.5 4.5 H6.5" stroke="#0f1f78" stroke-width="1.5"/><path d="M4.5 2.5 V6.5" stroke="#0f1f78" stroke-width="1.5"/></svg>
<svg style="left:88.30px;top:393.10px;" width="16" height="16" viewBox="0 0 16 16"><path d="M2.3 4.8 H8.7 L10 3.2 H14.6 V13.6 H2.3 Z" fill="#dcb67a"/><path d="M2.3 5.8 H14.6 V13.6 H2.3 Z" fill="#e2bd80"/><path d="M9.6 3.4 H14.4 V4.6 H8.8 Z" fill="#f3e0bd"/></svg>
<span class="t" style="left:108.60px;top:393.60px;font-size:11.5px;color:#000;transform:scaleX(0.9915);">Synonyms</span>
<svg style="left:73.00px;top:417.10px;" width="9" height="9" viewBox="0 0 9 9"><rect x="0.5" y="0.5" width="8" height="8" fill="#fff" stroke="#717b92" stroke-width="1.1"/><path d="M2.5 4.5 H6.5" stroke="#0f1f78" stroke-width="1.5"/><path d="M4.5 2.5 V6.5" stroke="#0f1f78" stroke-width="1.5"/></svg>
<svg style="left:88.30px;top:411.10px;" width="16" height="16" viewBox="0 0 16 16"><path d="M2.3 4.8 H8.7 L10 3.2 H14.6 V13.6 H2.3 Z" fill="#dcb67a"/><path d="M2.3 5.8 H14.6 V13.6 H2.3 Z" fill="#e2bd80"/><path d="M9.6 3.4 H14.4 V4.6 H8.8 Z" fill="#f3e0bd"/></svg>
<span class="t" style="left:108.60px;top:411.60px;font-size:11.5px;color:#000;transform:scaleX(1.0400);">Programmability</span>
<svg style="left:73.00px;top:435.10px;" width="9" height="9" viewBox="0 0 9 9"><rect x="0.5" y="0.5" width="8" height="8" fill="#fff" stroke="#717b92" stroke-width="1.1"/><path d="M2.5 4.5 H6.5" stroke="#0f1f78" stroke-width="1.5"/><path d="M4.5 2.5 V6.5" stroke="#0f1f78" stroke-width="1.5"/></svg>
<svg style="left:88.30px;top:429.10px;" width="16" height="16" viewBox="0 0 16 16"><path d="M2.3 4.8 H8.7 L10 3.2 H14.6 V13.6 H2.3 Z" fill="#dcb67a"/><path d="M2.3 5.8 H14.6 V13.6 H2.3 Z" fill="#e2bd80"/><path d="M9.6 3.4 H14.4 V4.6 H8.8 Z" fill="#f3e0bd"/></svg>
<span class="t" style="left:108.60px;top:429.60px;font-size:11.5px;color:#000;transform:scaleX(1.0055);">Query Store</span>
<svg style="left:73.00px;top:453.10px;" width="9" height="9" viewBox="0 0 9 9"><rect x="0.5" y="0.5" width="8" height="8" fill="#fff" stroke="#717b92" stroke-width="1.1"/><path d="M2.5 4.5 H6.5" stroke="#0f1f78" stroke-width="1.5"/><path d="M4.5 2.5 V6.5" stroke="#0f1f78" stroke-width="1.5"/></svg>
<svg style="left:88.30px;top:447.10px;" width="16" height="16" viewBox="0 0 16 16"><path d="M2.3 4.8 H8.7 L10 3.2 H14.6 V13.6 H2.3 Z" fill="#dcb67a"/><path d="M2.3 5.8 H14.6 V13.6 H2.3 Z" fill="#e2bd80"/><path d="M9.6 3.4 H14.4 V4.6 H8.8 Z" fill="#f3e0bd"/></svg>
<span class="t" style="left:108.60px;top:447.60px;font-size:11.5px;color:#000;transform:scaleX(0.9804);">Service Broker</span>
<svg style="left:73.00px;top:471.10px;" width="9" height="9" viewBox="0 0 9 9"><rect x="0.5" y="0.5" width="8" height="8" fill="#fff" stroke="#717b92" stroke-width="1.1"/><path d="M2.5 4.5 H6.5" stroke="#0f1f78" stroke-width="1.5"/><path d="M4.5 2.5 V6.5" stroke="#0f1f78" stroke-width="1.5"/></svg>
<svg style="left:88.30px;top:465.10px;" width="16" height="16" viewBox="0 0 16 16"><path d="M2.3 4.8 H8.7 L10 3.2 H14.6 V13.6 H2.3 Z" fill="#dcb67a"/><path d="M2.3 5.8 H14.6 V13.6 H2.3 Z" fill="#e2bd80"/><path d="M9.6 3.4 H14.4 V4.6 H8.8 Z" fill="#f3e0bd"/></svg>
<span class="t" style="left:108.60px;top:465.60px;font-size:11.5px;color:#000;transform:scaleX(1.0044);">Storage</span>
<svg style="left:73.00px;top:489.10px;" width="9" height="9" viewBox="0 0 9 9"><rect x="0.5" y="0.5" width="8" height="8" fill="#fff" stroke="#717b92" stroke-width="1.1"/><path d="M2.5 4.5 H6.5" stroke="#0f1f78" stroke-width="1.5"/><path d="M4.5 2.5 V6.5" stroke="#0f1f78" stroke-width="1.5"/></svg>
<svg style="left:88.30px;top:483.10px;" width="16" height="16" viewBox="0 0 16 16"><path d="M2.3 4.8 H8.7 L10 3.2 H14.6 V13.6 H2.3 Z" fill="#dcb67a"/><path d="M2.3 5.8 H14.6 V13.6 H2.3 Z" fill="#e2bd80"/><path d="M9.6 3.4 H14.4 V4.6 H8.8 Z" fill="#f3e0bd"/></svg>
<span class="t" style="left:108.60px;top:483.60px;font-size:11.5px;color:#000;transform:scaleX(0.9941);">Security</span>
<svg style="left:54.00px;top:507.10px;" width="9" height="9" viewBox="0 0 9 9"><rect x="0.5" y="0.5" width="8" height="8" fill="#fff" stroke="#717b92" stroke-width="1.1"/><path d="M2.5 4.5 H6.5" stroke="#0f1f78" stroke-width="1.5"/><path d="M4.5 2.5 V6.5" stroke="#0f1f78" stroke-width="1.5"/></svg>
<svg style="left:69.30px;top:501.10px;" width="16" height="16" viewBox="0 0 16 16"><g transform="translate(0,0.9)"><path d="M2.5 3.5 V12.3 C2.5 15.6 13.5 15.6 13.5 12.3 V3.5 Z" fill="#262626"/><ellipse cx="8" cy="3.6" rx="5.5" ry="2.6" fill="#f1f1f1" stroke="#262626" stroke-width="1.3"/></g></svg>
<span class="t" style="left:89.60px;top:501.60px;font-size:11.5px;color:#000;transform:scaleX(1.0132);">retail_dwh</span>
<svg style="left:54.00px;top:525.10px;" width="9" height="9" viewBox="0 0 9 9"><rect x="0.5" y="0.5" width="8" height="8" fill="#fff" stroke="#717b92" stroke-width="1.1"/><path d="M2.5 4.5 H6.5" stroke="#0f1f78" stroke-width="1.5"/><path d="M4.5 2.5 V6.5" stroke="#0f1f78" stroke-width="1.5"/></svg>
<svg style="left:69.30px;top:519.10px;" width="16" height="16" viewBox="0 0 16 16"><g transform="translate(0,0.9)"><path d="M2.5 3.5 V12.3 C2.5 15.6 13.5 15.6 13.5 12.3 V3.5 Z" fill="#262626"/><ellipse cx="8" cy="3.6" rx="5.5" ry="2.6" fill="#f1f1f1" stroke="#262626" stroke-width="1.3"/></g></svg>
<span class="t" style="left:89.60px;top:519.60px;font-size:11.5px;color:#000;transform:scaleX(0.9844);">Retail_Staging</span>
<svg style="left:54.00px;top:543.10px;" width="9" height="9" viewBox="0 0 9 9"><rect x="0.5" y="0.5" width="8" height="8" fill="#fff" stroke="#717b92" stroke-width="1.1"/><path d="M2.5 4.5 H6.5" stroke="#0f1f78" stroke-width="1.5"/><path d="M4.5 2.5 V6.5" stroke="#0f1f78" stroke-width="1.5"/></svg>
<svg style="left:69.30px;top:537.10px;" width="16" height="16" viewBox="0 0 16 16"><g transform="translate(0,0.9)"><path d="M2.5 3.5 V12.3 C2.5 15.6 13.5 15.6 13.5 12.3 V3.5 Z" fill="#262626"/><ellipse cx="8" cy="3.6" rx="5.5" ry="2.6" fill="#f1f1f1" stroke="#262626" stroke-width="1.3"/></g></svg>
<span class="t" style="left:89.60px;top:537.60px;font-size:11.5px;color:#000;transform:scaleX(1.0420);">temperature</span>
<svg style="left:54.00px;top:561.10px;" width="9" height="9" viewBox="0 0 9 9"><rect x="0.5" y="0.5" width="8" height="8" fill="#fff" stroke="#717b92" stroke-width="1.1"/><path d="M2.5 4.5 H6.5" stroke="#0f1f78" stroke-width="1.5"/><path d="M4.5 2.5 V6.5" stroke="#0f1f78" stroke-width="1.5"/></svg>
<svg style="left:69.30px;top:555.10px;" width="16" height="16" viewBox="0 0 16 16"><g transform="translate(0,0.9)"><path d="M2.5 3.5 V12.3 C2.5 15.6 13.5 15.6 13.5 12.3 V3.5 Z" fill="#262626"/><ellipse cx="8" cy="3.6" rx="5.5" ry="2.6" fill="#f1f1f1" stroke="#262626" stroke-width="1.3"/></g></svg>
<span class="t" style="left:89.60px;top:555.60px;font-size:11.5px;color:#000;transform:scaleX(1.0004);">transactions_Staging</span>
<svg style="left:54.00px;top:579.10px;" width="9" height="9" viewBox="0 0 9 9"><rect x="0.5" y="0.5" width="8" height="8" fill="#fff" stroke="#717b92" stroke-width="1.1"/><path d="M2.5 4.5 H6.5" stroke="#0f1f78" stroke-width="1.5"/><path d="M4.5 2.5 V6.5" stroke="#0f1f78" stroke-width="1.5"/></svg>
<svg style="left:69.30px;top:573.10px;" width="16" height="16" viewBox="0 0 16 16"><g transform="translate(0,0.9)"><path d="M2.5 3.5 V12.3 C2.5 15.6 13.5 15.6 13.5 12.3 V3.5 Z" fill="#262626"/><ellipse cx="8" cy="3.6" rx="5.5" ry="2.6" fill="#f1f1f1" stroke="#262626" stroke-width="1.3"/></g></svg>
<span class="t" style="left:89.60px;top:573.60px;font-size:11.5px;color:#000;transform:scaleX(0.9950);">transactions_warehouse</span>
<svg style="left:35.00px;top:597.10px;" width="9" height="9" viewBox="0 0 9 9"><rect x="0.5" y="0.5" width="8" height="8" fill="#fff" stroke="#717b92" stroke-width="1.1"/><path d="M2.5 4.5 H6.5" stroke="#0f1f78" stroke-width="1.5"/><path d="M4.5 2.5 V6.5" stroke="#0f1f78" stroke-width="1.5"/></svg>
<svg style="left:50.30px;top:591.10px;" width="16" height="16" viewBox="0 0 16 16"><path d="M2.3 4.8 H8.7 L10 3.2 H14.6 V13.6 H2.3 Z" fill="#dcb67a"/><path d="M2.3 5.8 H14.6 V13.6 H2.3 Z" fill="#e2bd80"/><path d="M9.6 3.4 H14.4 V4.6 H8.8 Z" fill="#f3e0bd"/></svg>
<span class="t" style="left:70.60px;top:591.60px;font-size:11.5px;color:#000;transform:scaleX(0.9941);">Security</span>
<svg style="left:35.00px;top:615.10px;" width="9" height="9" viewBox="0 0 9 9"><rect x="0.5" y="0.5" width="8" height="8" fill="#fff" stroke="#717b92" stroke-width="1.1"/><path d="M2.5 4.5 H6.5" stroke="#0f1f78" stroke-width="1.5"/><path d="M4.5 2.5 V6.5" stroke="#0f1f78" stroke-width="1.5"/></svg>
<svg style="left:50.30px;top:609.10px;" width="16" height="16" viewBox="0 0 16 16"><path d="M2.3 4.8 H8.7 L10 3.2 H14.6 V13.6 H2.3 Z" fill="#dcb67a"/><path d="M2.3 5.8 H14.6 V13.6 H2.3 Z" fill="#e2bd80"/><path d="M9.6 3.4 H14.4 V4.6 H8.8 Z" fill="#f3e0bd"/></svg>
<span class="t" style="left:70.60px;top:609.60px;font-size:11.5px;color:#000;transform:scaleX(0.9879);">Server Objects</span>
<svg style="left:35.00px;top:633.10px;" width="9" height="9" viewBox="0 0 9 9"><rect x="0.5" y="0.5" width="8" height="8" fill="#fff" stroke="#717b92" stroke-width="1.1"/><path d="M2.5 4.5 H6.5" stroke="#0f1f78" stroke-width="1.5"/><path d="M4.5 2.5 V6.5" stroke="#0f1f78" stroke-width="1.5"/></svg>
<svg style="left:50.30px;top:627.10px;" width="16" height="16" viewBox="0 0 16 16"><path d="M2.3 4.8 H8.7 L10 3.2 H14.6 V13.6 H2.3 Z" fill="#dcb67a"/><path d="M2.3 5.8 H14.6 V13.6 H2.3 Z" fill="#e2bd80"/><path d="M9.6 3.4 H14.4 V4.6 H8.8 Z" fill="#f3e0bd"/></svg>
<span class="t" style="left:70.60px;top:627.60px;font-size:11.5px;color:#000;transform:scaleX(1.0172);">Replication</span>
<svg style="left:35.00px;top:651.10px;" width="9" height="9" viewBox="0 0 9 9"><rect x="0.5" y="0.5" width="8" height="8" fill="#fff" stroke="#717b92" stroke-width="1.1"/><path d="M2.5 4.5 H6.5" stroke="#0f1f78" stroke-width="1.5"/><path d="M4.5 2.5 V6.5" stroke="#0f1f78" stroke-width="1.5"/></svg>
<svg style="left:50.30px;top:645.10px;" width="16" height="16" viewBox="0 0 16 16"><path d="M2.3 4.8 H8.7 L10 3.2 H14.6 V13.6 H2.3 Z" fill="#dcb67a"/><path d="M2.3 5.8 H14.6 V13.6 H2.3 Z" fill="#e2bd80"/><path d="M9.6 3.4 H14.4 V4.6 H8.8 Z" fill="#f3e0bd"/></svg>
<span class="t" style="left:70.60px;top:645.60px;font-size:11.5px;color:#000;transform:scaleX(1.0273);">Always On High Availability</span>
<svg style="left:35.00px;top:669.10px;" width="9" height="9" viewBox="0 0 9 9"><rect x="0.5" y="0.5" width="8" height="8" fill="#fff" stroke="#717b92" stroke-width="1.1"/><path d="M2.5 4.5 H6.5" stroke="#0f1f78" stroke-width="1.5"/><path d="M4.5 2.5 V6.5" stroke="#0f1f78" stroke-width="1.5"/></svg>
<svg style="left:50.30px;top:663.10px;" width="16" height="16" viewBox="0 0 16 16"><path d="M2.3 4.8 H8.7 L10 3.2 H14.6 V13.6 H2.3 Z" fill="#dcb67a"/><path d="M2.3 5.8 H14.6 V13.6 H2.3 Z" fill="#e2bd80"/><path d="M9.6 3.4 H14.4 V4.6 H8.8 Z" fill="#f3e0bd"/></svg>
<span class="t" style="left:70.60px;top:663.60px;font-size:11.5px;color:#000;transform:scaleX(1.0359);">Management</span>
<div style="left:264.73px;top:157.50px;width:18.40px;height:538.71px;background:#f0f0f0;"></div>
<div style="left:264.73px;top:176.21px;width:15.03px;height:420.73px;background:#cdcdcd;"></div>
<svg style="left:267.73px;top:165.02px;" width="9" height="6" viewBox="0 0 9 6"><path d="M0.8 5.2 L4.5 1.2 L8.2 5.2" fill="none" stroke="#1e1e1e" stroke-width="1.6"/></svg>
<svg style="left:267.73px;top:667.16px;" width="9" height="6" viewBox="0 0 9 6"><path d="M0.8 0.8 L4.5 4.8 L8.2 0.8" fill="none" stroke="#1e1e1e" stroke-width="1.6"/></svg>
<div style="left:6.74px;top:679.86px;width:276.39px;height:16.35px;background:#f0f0f0;"></div>
<div style="left:26.50px;top:680.86px;width:137.15px;height:13.85px;background:#cdcdcd;"></div>
<svg style="left:14.08px;top:683.53px;" width="6" height="9" viewBox="0 0 6 9"><path d="M5.2 0.8 L1.2 4.5 L5.2 8.2" fill="none" stroke="#1e1e1e" stroke-width="1.6"/></svg>
<svg style="left:252.44px;top:683.53px;" width="6" height="9" viewBox="0 0 6 9"><path d="M0.8 0.8 L4.8 4.5 L0.8 8.2" fill="none" stroke="#1e1e1e" stroke-width="1.6"/></svg>
<div style="left:289.87px;top:109.28px;width:259.40px;height:20.35px;background:#fff29d;"></div>
<div style="left:289.87px;top:127.72px;width:1069.99px;height:1.91px;background:#fff29d;"></div>
<span class="t" style="left:293.83px;top:111.96px;font-size:11.5px;color:#000;transform:scaleX(0.9583);">DESKTOP-A6QOIAT.RestaurantDB - ERD*</span>
<svg style="left:516.35px;top:114.73px;" width="9" height="8" viewBox="0 0 9 8"><path d="M0 4 H4 M4 0.8 V7.2 M4 1.5 H8 V5.5 H4 M4 4.6 H8" fill="none" stroke="#1e1e1e" stroke-width="1.2"/></svg>
<svg style="left:534.38px;top:113.93px;" width="10" height="10" viewBox="0 0 10 10"><path d="M0.8 0.8 L9 9 M9 0.8 L0.8 9" stroke="#1e1e1e" stroke-width="1.5"/></svg>
<svg style="left:1348.79px;top:117.48px;" width="8" height="5" viewBox="0 0 8 5"><path d="M0 0 H8 L4 4.6 Z" fill="#fff"/></svg>
<div style="left:289.87px;top:129.63px;width:1069.99px;height:567.57px;background:#fff;"></div>
<div style="left:1341.96px;top:129.63px;width:17.89px;height:551.18px;background:#f7f7f7;"></div>
<div style="left:289.87px;top:680.81px;width:1052.09px;height:16.39px;background:#f7f7f7;"></div>
<div style="left:1341.96px;top:130.13px;width:16.89px;height:16.57px;background:#f0f0f0;border-top:1px solid #fff;border-left:1px solid #fff;border-right:1px solid #696969;border-bottom:1px solid #696969;"></div>
<div style="left:1342.96px;top:131.13px;width:14.89px;height:14.57px;background:#f0f0f0;border-top:1px solid #f0f0f0;border-left:1px solid #f0f0f0;border-right:1px solid #a0a0a0;border-bottom:1px solid #a0a0a0;"></div>
<svg style="left:1346.46px;top:136.13px;" width="8" height="5" viewBox="0 0 8 5"><path d="M0 4.5 H8 L4 0 Z" fill="#000"/></svg>
<div style="left:1341.96px;top:237.00px;width:16.89px;height:340.27px;background:#f0f0f0;border-top:1px solid #fff;border-left:1px solid #fff;border-right:1px solid #696969;border-bottom:1px solid #696969;"></div>
<div style="left:1342.96px;top:238.00px;width:14.89px;height:338.27px;background:#f0f0f0;border-top:1px solid #f0f0f0;border-left:1px solid #f0f0f0;border-right:1px solid #a0a0a0;border-bottom:1px solid #a0a0a0;"></div>
<div style="left:1341.96px;top:662.78px;width:16.89px;height:16.12px;background:#f0f0f0;border-top:1px solid #fff;border-left:1px solid #fff;border-right:1px solid #696969;border-bottom:1px solid #696969;"></div>
<div style="left:1342.96px;top:663.78px;width:14.89px;height:14.12px;background:#f0f0f0;border-top:1px solid #f0f0f0;border-left:1px solid #f0f0f0;border-right:1px solid #a0a0a0;border-bottom:1px solid #a0a0a0;"></div>
<svg style="left:1346.46px;top:668.78px;" width="8" height="5" viewBox="0 0 8 5"><path d="M0 0 H8 L4 4.5 Z" fill="#000"/></svg>
<div style="left:290.37px;top:680.81px;width:17.80px;height:15.89px;background:#f0f0f0;border-top:1px solid #fff;border-left:1px solid #fff;border-right:1px solid #696969;border-bottom:1px solid #696969;"></div>
<div style="left:291.37px;top:681.81px;width:15.80px;height:13.89px;background:#f0f0f0;border-top:1px solid #f0f0f0;border-left:1px solid #f0f0f0;border-right:1px solid #a0a0a0;border-bottom:1px solid #a0a0a0;"></div>
<svg style="left:295.87px;top:685.31px;" width="5" height="8" viewBox="0 0 5 8"><path d="M4.5 0 V8 L0 4 Z" fill="#000"/></svg>
<div style="left:374.83px;top:680.81px;width:910.03px;height:15.89px;background:#f0f0f0;border-top:1px solid #fff;border-left:1px solid #fff;border-right:1px solid #696969;border-bottom:1px solid #696969;"></div>
<div style="left:375.83px;top:681.81px;width:908.03px;height:13.89px;background:#f0f0f0;border-top:1px solid #f0f0f0;border-left:1px solid #f0f0f0;border-right:1px solid #a0a0a0;border-bottom:1px solid #a0a0a0;"></div>
<div style="left:1326.93px;top:680.81px;width:14.21px;height:15.89px;background:#f0f0f0;border-top:1px solid #fff;border-left:1px solid #fff;border-right:1px solid #696969;border-bottom:1px solid #696969;"></div>
<div style="left:1327.93px;top:681.81px;width:12.21px;height:13.89px;background:#f0f0f0;border-top:1px solid #f0f0f0;border-left:1px solid #f0f0f0;border-right:1px solid #a0a0a0;border-bottom:1px solid #a0a0a0;"></div>
<svg style="left:1332.93px;top:685.31px;" width="5" height="8" viewBox="0 0 5 8"><path d="M0 0 V8 L4.5 4 Z" fill="#000"/></svg>
<div style="left:1341.96px;top:678.90px;width:17.89px;height:18.30px;background:#f4f4f4;"></div>
<svg style="left:1342.46px;top:679.18px;" width="17" height="17" viewBox="0 0 17 17"><path d="M8.5 1 V16 M1 8.5 H16" stroke="#000" stroke-width="1.4"/><path d="M8.5 0 L11.3 3.6 H5.7 Z M8.5 17 L11.3 13.4 H5.7 Z M0 8.5 L3.6 5.7 V11.3 Z M17 8.5 L13.4 5.7 V11.3 Z" fill="#000"/></svg>
<div style="left:412.40px;top:168.29px;width:217.47px;height:164.06px;background:#0a5ccf;"></div>
<div style="left:415.40px;top:168.79px;width:211.47px;height:24.00px;background:#0078d7;"></div>
<div style="left:412.40px;top:168.29px;width:217.47px;height:1.00px;background:#0b3f94;"></div>
<div style="left:411.70px;top:169.29px;width:0.70px;height:163.06px;background:#f6d3b0;"></div>
<div style="left:626.26px;top:192.29px;width:0.70px;height:137.06px;background:#f6d3b0;"></div>
<div style="left:412.40px;top:332.35px;width:217.47px;height:0.70px;background:#f6d3b0;"></div>
<div style="left:415.40px;top:192.29px;width:211.47px;height:137.06px;background:#fff;"></div>
<span class="t b" style="left:418.80px;top:175.63px;font-size:15px;color:#fff;transform:scaleX(1.0494);">OrderItems</span>
<div style="left:417.40px;top:215.69px;width:206.47px;height:1.00px;background:#e2e2e2;"></div>
<div style="left:419.20px;top:199.09px;width:15.50px;height:12.60px;background:#e6e6e6;"></div>
<svg style="left:426.40px;top:199.89px;" width="7" height="11" viewBox="0 0 7 11"><path d="M3.5 0.6 C5.3 0.6 6.3 1.8 6.3 3.1 C6.3 4.3 5.6 5 4.6 5.4 V6.6 L5.5 7.3 L4.6 8 L5.5 8.8 L4.6 9.6 L3.6 10.5 L2.5 9.6 V5.4 C1.4 5 0.7 4.3 0.7 3.1 C0.7 1.8 1.7 0.6 3.5 0.6 Z" fill="#ffff00" stroke="#000" stroke-width="1.15"/><ellipse cx="3.5" cy="2.6" rx="0.9" ry="0.8" fill="#fff" stroke="#000" stroke-width="0.8"/></svg>
<span class="t" style="left:444.40px;top:196.59px;font-size:11.5px;color:#000;transform:scaleX(1.0066);">OrderItem_ID</span>
<div style="left:417.40px;top:238.69px;width:206.47px;height:1.00px;background:#e2e2e2;"></div>
<span class="t" style="left:444.40px;top:219.59px;font-size:11.5px;color:#000;transform:scaleX(0.9852);">Order_ID</span>
<div style="left:417.40px;top:261.69px;width:206.47px;height:1.00px;background:#e2e2e2;"></div>
<span class="t" style="left:444.40px;top:242.59px;font-size:11.5px;color:#000;transform:scaleX(0.9902);">Item_ID</span>
<div style="left:417.40px;top:284.69px;width:206.47px;height:1.00px;background:#e2e2e2;"></div>
<span class="t" style="left:444.40px;top:265.59px;font-size:11.5px;color:#000;transform:scaleX(1.0483);">Quantity</span>
<div style="left:417.40px;top:307.69px;width:206.47px;height:1.00px;background:#e2e2e2;"></div>
<span class="t" style="left:444.40px;top:288.59px;font-size:11.5px;color:#000;transform:scaleX(1.0015);">PriceAtTime</span>
<div style="left:436.40px;top:193.29px;width:1.00px;height:115.00px;background:#e2e2e2;"></div>
<div style="left:407.20px;top:400.51px;width:218.18px;height:237.03px;background:#444;"></div>
<div style="left:408.20px;top:401.51px;width:215.88px;height:234.73px;background:#fff;"></div>
<div style="left:409.20px;top:402.51px;width:213.88px;height:232.73px;background:#efefef;"></div>
<div style="left:410.20px;top:424.51px;width:211.38px;height:209.23px;background:#fff;border-top:1px solid #808080;border-left:1px solid #808080;border-right:1px solid #c8c8c8;border-bottom:1px solid #c8c8c8;"></div>
<span class="t b" style="left:414.00px;top:408.05px;font-size:15px;color:#000;transform:scaleX(1.0822);">MenuItems</span>
<div style="left:412.20px;top:447.91px;width:205.88px;height:1.00px;background:#e2e2e2;"></div>
<div style="left:414.00px;top:431.31px;width:15.50px;height:12.60px;background:#e6e6e6;"></div>
<svg style="left:421.20px;top:432.11px;" width="7" height="11" viewBox="0 0 7 11"><path d="M3.5 0.6 C5.3 0.6 6.3 1.8 6.3 3.1 C6.3 4.3 5.6 5 4.6 5.4 V6.6 L5.5 7.3 L4.6 8 L5.5 8.8 L4.6 9.6 L3.6 10.5 L2.5 9.6 V5.4 C1.4 5 0.7 4.3 0.7 3.1 C0.7 1.8 1.7 0.6 3.5 0.6 Z" fill="#ffff00" stroke="#000" stroke-width="1.15"/><ellipse cx="3.5" cy="2.6" rx="0.9" ry="0.8" fill="#fff" stroke="#000" stroke-width="0.8"/></svg>
<span class="t" style="left:439.20px;top:428.81px;font-size:11.5px;color:#000;transform:scaleX(0.9902);">Item_ID</span>
<div style="left:412.20px;top:470.91px;width:205.88px;height:1.00px;background:#e2e2e2;"></div>
<span class="t" style="left:439.20px;top:451.81px;font-size:11.5px;color:#000;transform:scaleX(1.0179);">Name</span>
<div style="left:412.20px;top:493.91px;width:205.88px;height:1.00px;background:#e2e2e2;"></div>
<span class="t" style="left:439.20px;top:474.81px;font-size:11.5px;color:#000;transform:scaleX(1.0316);">Description</span>
<div style="left:412.20px;top:516.91px;width:205.88px;height:1.00px;background:#e2e2e2;"></div>
<span class="t" style="left:439.20px;top:497.81px;font-size:11.5px;color:#000;transform:scaleX(0.9630);">Price</span>
<div style="left:412.20px;top:539.91px;width:205.88px;height:1.00px;background:#e2e2e2;"></div>
<span class="t" style="left:439.20px;top:520.81px;font-size:11.5px;color:#000;transform:scaleX(1.0119);">Category</span>
<div style="left:412.20px;top:562.91px;width:205.88px;height:1.00px;background:#e2e2e2;"></div>
<span class="t" style="left:439.20px;top:543.81px;font-size:11.5px;color:#000;transform:scaleX(0.9686);">ImageURL</span>
<div style="left:412.20px;top:585.91px;width:205.88px;height:1.00px;background:#e2e2e2;"></div>
<span class="t" style="left:439.20px;top:566.81px;font-size:11.5px;color:#000;transform:scaleX(0.9961);">IsAvailable</span>
<div style="left:412.20px;top:608.91px;width:205.88px;height:1.00px;background:#e2e2e2;"></div>
<span class="t" style="left:439.20px;top:589.81px;font-size:11.5px;color:#000;transform:scaleX(1.0118);">CreatedAt</span>
<div style="left:431.20px;top:425.51px;width:1.00px;height:184.00px;background:#e2e2e2;"></div>
<div style="left:701.44px;top:276.21px;width:217.90px;height:356.14px;background:#444;"></div>
<div style="left:702.44px;top:277.21px;width:215.60px;height:353.84px;background:#fff;"></div>
<div style="left:703.44px;top:278.21px;width:213.60px;height:351.84px;background:#efefef;"></div>
<div style="left:704.44px;top:300.21px;width:211.10px;height:328.34px;background:#fff;border-top:1px solid #808080;border-left:1px solid #808080;border-right:1px solid #c8c8c8;border-bottom:1px solid #c8c8c8;"></div>
<span class="t b" style="left:708.24px;top:283.75px;font-size:15px;color:#000;transform:scaleX(1.0162);">Orders</span>
<div style="left:706.44px;top:323.61px;width:205.60px;height:1.00px;background:#e2e2e2;"></div>
<div style="left:708.24px;top:307.01px;width:15.50px;height:12.60px;background:#e6e6e6;"></div>
<svg style="left:715.44px;top:307.81px;" width="7" height="11" viewBox="0 0 7 11"><path d="M3.5 0.6 C5.3 0.6 6.3 1.8 6.3 3.1 C6.3 4.3 5.6 5 4.6 5.4 V6.6 L5.5 7.3 L4.6 8 L5.5 8.8 L4.6 9.6 L3.6 10.5 L2.5 9.6 V5.4 C1.4 5 0.7 4.3 0.7 3.1 C0.7 1.8 1.7 0.6 3.5 0.6 Z" fill="#ffff00" stroke="#000" stroke-width="1.15"/><ellipse cx="3.5" cy="2.6" rx="0.9" ry="0.8" fill="#fff" stroke="#000" stroke-width="0.8"/></svg>
<span class="t" style="left:733.44px;top:304.50px;font-size:11.5px;color:#000;transform:scaleX(0.9852);">Order_ID</span>
<div style="left:706.44px;top:346.61px;width:205.60px;height:1.00px;background:#e2e2e2;"></div>
<span class="t" style="left:733.44px;top:327.50px;font-size:11.5px;color:#000;transform:scaleX(1.0415);">OrderNumber</span>
<div style="left:706.44px;top:369.61px;width:205.60px;height:1.00px;background:#e2e2e2;"></div>
<span class="t" style="left:733.44px;top:350.50px;font-size:11.5px;color:#000;transform:scaleX(0.9426);">User_ID</span>
<div style="left:706.44px;top:392.61px;width:205.60px;height:1.00px;background:#e2e2e2;"></div>
<span class="t" style="left:733.44px;top:373.50px;font-size:11.5px;color:#000;transform:scaleX(0.9682);">Staff_ID</span>
<div style="left:706.44px;top:415.61px;width:205.60px;height:1.00px;background:#e2e2e2;"></div>
<span class="t" style="left:733.44px;top:396.50px;font-size:11.5px;color:#000;transform:scaleX(1.0179);">OrderType</span>
<div style="left:706.44px;top:438.61px;width:205.60px;height:1.00px;background:#e2e2e2;"></div>
<span class="t" style="left:733.44px;top:419.50px;font-size:11.5px;color:#000;transform:scaleX(0.9814);">Status</span>
<div style="left:706.44px;top:461.61px;width:205.60px;height:1.00px;background:#e2e2e2;"></div>
<span class="t" style="left:733.44px;top:442.50px;font-size:11.5px;color:#000;transform:scaleX(1.0656);">TotalAmount</span>
<div style="left:706.44px;top:484.61px;width:205.60px;height:1.00px;background:#e2e2e2;"></div>
<span class="t" style="left:733.44px;top:465.50px;font-size:11.5px;color:#000;transform:scaleX(0.9997);">DeliveryAddress</span>
<div style="left:706.44px;top:507.61px;width:205.60px;height:1.00px;background:#e2e2e2;"></div>
<span class="t" style="left:733.44px;top:488.50px;font-size:11.5px;color:#000;transform:scaleX(1.0363);">PaymentMethod</span>
<div style="left:706.44px;top:530.61px;width:205.60px;height:1.00px;background:#e2e2e2;"></div>
<span class="t" style="left:733.44px;top:511.50px;font-size:11.5px;color:#000;transform:scaleX(0.9929);">PaymentStatus</span>
<div style="left:706.44px;top:553.61px;width:205.60px;height:1.00px;background:#e2e2e2;"></div>
<span class="t" style="left:733.44px;top:534.50px;font-size:11.5px;color:#000;transform:scaleX(1.0302);">OrderNotes</span>
<div style="left:706.44px;top:576.61px;width:205.60px;height:1.00px;background:#e2e2e2;"></div>
<span class="t" style="left:733.44px;top:557.50px;font-size:11.5px;color:#000;transform:scaleX(1.0118);">CreatedAt</span>
<div style="left:706.44px;top:599.61px;width:205.60px;height:1.00px;background:#e2e2e2;"></div>
<span class="t" style="left:733.44px;top:580.50px;font-size:11.5px;color:#000;transform:scaleX(1.0448);">UpdatedAt</span>
<div style="left:725.44px;top:301.21px;width:1.00px;height:299.00px;background:#e2e2e2;"></div>
<div style="left:979.42px;top:163.10px;width:217.77px;height:189.22px;background:#444;"></div>
<div style="left:980.42px;top:164.10px;width:215.47px;height:186.92px;background:#fff;"></div>
<div style="left:981.42px;top:165.10px;width:213.47px;height:184.92px;background:#efefef;"></div>
<div style="left:982.42px;top:187.10px;width:210.97px;height:161.42px;background:#fff;border-top:1px solid #808080;border-left:1px solid #808080;border-right:1px solid #c8c8c8;border-bottom:1px solid #c8c8c8;"></div>
<span class="t b" style="left:986.22px;top:170.64px;font-size:15px;color:#000;transform:scaleX(0.9532);">Users</span>
<div style="left:984.42px;top:210.50px;width:205.47px;height:1.00px;background:#e2e2e2;"></div>
<div style="left:986.22px;top:193.90px;width:15.50px;height:12.60px;background:#e6e6e6;"></div>
<svg style="left:993.42px;top:194.70px;" width="7" height="11" viewBox="0 0 7 11"><path d="M3.5 0.6 C5.3 0.6 6.3 1.8 6.3 3.1 C6.3 4.3 5.6 5 4.6 5.4 V6.6 L5.5 7.3 L4.6 8 L5.5 8.8 L4.6 9.6 L3.6 10.5 L2.5 9.6 V5.4 C1.4 5 0.7 4.3 0.7 3.1 C0.7 1.8 1.7 0.6 3.5 0.6 Z" fill="#ffff00" stroke="#000" stroke-width="1.15"/><ellipse cx="3.5" cy="2.6" rx="0.9" ry="0.8" fill="#fff" stroke="#000" stroke-width="0.8"/></svg>
<span class="t" style="left:1011.42px;top:191.40px;font-size:11.5px;color:#000;transform:scaleX(0.9426);">User_ID</span>
<div style="left:984.42px;top:233.50px;width:205.47px;height:1.00px;background:#e2e2e2;"></div>
<span class="t" style="left:1011.42px;top:214.40px;font-size:11.5px;color:#000;transform:scaleX(1.0179);">Name</span>
<div style="left:984.42px;top:256.50px;width:205.47px;height:1.00px;background:#e2e2e2;"></div>
<span class="t" style="left:1011.42px;top:237.40px;font-size:11.5px;color:#000;transform:scaleX(0.9705);">Email</span>
<div style="left:984.42px;top:279.50px;width:205.47px;height:1.00px;background:#e2e2e2;"></div>
<span class="t" style="left:1011.42px;top:260.40px;font-size:11.5px;color:#000;transform:scaleX(0.9952);">Phone</span>
<div style="left:984.42px;top:302.50px;width:205.47px;height:1.00px;background:#e2e2e2;"></div>
<span class="t" style="left:1011.42px;top:283.40px;font-size:11.5px;color:#000;transform:scaleX(0.9735);">PasswordHash</span>
<div style="left:984.42px;top:325.50px;width:205.47px;height:1.00px;background:#e2e2e2;"></div>
<span class="t" style="left:1011.42px;top:306.40px;font-size:11.5px;color:#000;transform:scaleX(1.0118);">CreatedAt</span>
<div style="left:1003.42px;top:188.10px;width:1.00px;height:138.00px;background:#e2e2e2;"></div>
<div style="left:974.37px;top:434.66px;width:218.18px;height:189.49px;background:#444;"></div>
<div style="left:975.37px;top:435.66px;width:215.88px;height:187.19px;background:#fff;"></div>
<div style="left:976.37px;top:436.66px;width:213.88px;height:185.19px;background:#efefef;"></div>
<div style="left:977.37px;top:458.66px;width:211.38px;height:161.69px;background:#fff;border-top:1px solid #808080;border-left:1px solid #808080;border-right:1px solid #c8c8c8;border-bottom:1px solid #c8c8c8;"></div>
<span class="t b" style="left:981.17px;top:442.20px;font-size:15px;color:#000;transform:scaleX(1.0947);">Staff</span>
<div style="left:979.37px;top:482.06px;width:205.88px;height:1.00px;background:#e2e2e2;"></div>
<div style="left:981.17px;top:465.46px;width:15.50px;height:12.60px;background:#e6e6e6;"></div>
<svg style="left:988.37px;top:466.26px;" width="7" height="11" viewBox="0 0 7 11"><path d="M3.5 0.6 C5.3 0.6 6.3 1.8 6.3 3.1 C6.3 4.3 5.6 5 4.6 5.4 V6.6 L5.5 7.3 L4.6 8 L5.5 8.8 L4.6 9.6 L3.6 10.5 L2.5 9.6 V5.4 C1.4 5 0.7 4.3 0.7 3.1 C0.7 1.8 1.7 0.6 3.5 0.6 Z" fill="#ffff00" stroke="#000" stroke-width="1.15"/><ellipse cx="3.5" cy="2.6" rx="0.9" ry="0.8" fill="#fff" stroke="#000" stroke-width="0.8"/></svg>
<span class="t" style="left:1006.37px;top:462.96px;font-size:11.5px;color:#000;transform:scaleX(0.9682);">Staff_ID</span>
<div style="left:979.37px;top:505.06px;width:205.88px;height:1.00px;background:#e2e2e2;"></div>
<span class="t" style="left:1006.37px;top:485.96px;font-size:11.5px;color:#000;transform:scaleX(0.9896);">Username</span>
<div style="left:979.37px;top:528.06px;width:205.88px;height:1.00px;background:#e2e2e2;"></div>
<span class="t" style="left:1006.37px;top:508.96px;font-size:11.5px;color:#000;transform:scaleX(1.0179);">Name</span>
<div style="left:979.37px;top:551.06px;width:205.88px;height:1.00px;background:#e2e2e2;"></div>
<span class="t" style="left:1006.37px;top:531.96px;font-size:11.5px;color:#000;transform:scaleX(0.9739);">Role</span>
<div style="left:979.37px;top:574.06px;width:205.88px;height:1.00px;background:#e2e2e2;"></div>
<span class="t" style="left:1006.37px;top:554.96px;font-size:11.5px;color:#000;transform:scaleX(0.9735);">PasswordHash</span>
<div style="left:979.37px;top:597.06px;width:205.88px;height:1.00px;background:#e2e2e2;"></div>
<span class="t" style="left:1006.37px;top:577.96px;font-size:11.5px;color:#000;transform:scaleX(1.0118);">CreatedAt</span>
<div style="left:998.37px;top:459.66px;width:1.00px;height:138.00px;background:#e2e2e2;"></div>
<svg style="left:0;top:0" width="1366" height="730" viewBox="0 0 1366 730"><ellipse cx="634.44" cy="180.18" rx="3.3" ry="3.5" fill="#fff" stroke="#000" stroke-width="1.2"/><ellipse cx="642.02" cy="180.18" rx="3.3" ry="3.5" fill="#fff" stroke="#000" stroke-width="1.2"/><path d="M647.62 182.22 L647.62 178.26 L656.23 178.26" fill="none" stroke="#8a8a8a" stroke-width="1.2"/><path d="M647.62 182.22 L652.13 182.22" fill="none" stroke="#000" stroke-width="1.5"/><path d="M652.13 182.22 L652.13 284.54" fill="none" stroke="#8a8a8a" stroke-width="1.2"/><path d="M656.23 178.26 L656.23 280.99" fill="none" stroke="#000" stroke-width="1.5"/><path d="M656.23 280.99 L687.10 280.99" fill="none" stroke="#8a8a8a" stroke-width="1.2"/><path d="M652.13 284.54 L687.10 284.54" fill="none" stroke="#000" stroke-width="1.5"/><g transform="translate(686.14,282.49)"><path d="M8 -2 H15.4 V1.2 L14.3 3.2 L13.2 1.6 L12.1 3.2 L11 1.6 H8 Z" fill="#ffff00" stroke="#000" stroke-width="1"/><circle cx="4.7" cy="0" r="4.1" fill="#ffff00" stroke="#000" stroke-width="1.2"/><circle cx="3.4" cy="0" r="1.2" fill="#fff" stroke="#000" stroke-width="0.8"/></g><ellipse cx="418.68" cy="336.72" rx="3.3" ry="3.5" fill="#fff" stroke="#000" stroke-width="1.2"/><ellipse cx="418.68" cy="344.23" rx="3.3" ry="3.5" fill="#fff" stroke="#000" stroke-width="1.2"/><path d="M415.95 349.42 L415.95 385.21" fill="none" stroke="#8a8a8a" stroke-width="1.2"/><path d="M419.91 349.42 L419.91 385.21" fill="none" stroke="#000" stroke-width="1.5"/><path d="M415.95 349.42 L419.91 349.42" fill="none" stroke="#000" stroke-width="1.5"/><g transform="translate(418.54,384.80)"><path d="M-2 8 V15.6 H1.2 L3.2 14.3 L1.6 13.2 L3.2 12.1 L1.6 11 V8 Z" fill="#ffff00" stroke="#000" stroke-width="1"/><circle cx="0" cy="4.7" r="4.1" fill="#ffff00" stroke="#000" stroke-width="1.2"/><circle cx="0" cy="3.4" r="1.2" fill="#fff" stroke="#000" stroke-width="0.8"/></g><ellipse cx="832.44" cy="264.46" rx="3.3" ry="3.5" fill="#fff" stroke="#000" stroke-width="1.2"/><ellipse cx="832.44" cy="272.11" rx="3.3" ry="3.5" fill="#fff" stroke="#000" stroke-width="1.2"/><path d="M815.78 262.27 L815.78 166.24 L965.76 166.24" fill="none" stroke="#8a8a8a" stroke-width="1.2"/><path d="M819.05 258.86 L819.05 170.07 L965.76 170.07" fill="none" stroke="#000" stroke-width="1.5"/><path d="M819.05 258.86 L831.21 258.86" fill="none" stroke="#8a8a8a" stroke-width="1.2"/><path d="M815.78 262.27 L831.21 262.27" fill="none" stroke="#000" stroke-width="1.5"/><path d="M831.21 258.86 L831.21 262.27" fill="none" stroke="#000" stroke-width="1.5"/><g transform="translate(964.81,168.84)"><path d="M8 -2 H15.4 V1.2 L14.3 3.2 L13.2 1.6 L12.1 3.2 L11 1.6 H8 Z" fill="#ffff00" stroke="#000" stroke-width="1"/><circle cx="4.7" cy="0" r="4.1" fill="#ffff00" stroke="#000" stroke-width="1.2"/><circle cx="3.4" cy="0" r="1.2" fill="#fff" stroke="#000" stroke-width="0.8"/></g><ellipse cx="923.42" cy="492.03" rx="3.3" ry="3.5" fill="#fff" stroke="#000" stroke-width="1.2"/><ellipse cx="931.07" cy="492.03" rx="3.3" ry="3.5" fill="#fff" stroke="#000" stroke-width="1.2"/><path d="M935.44 489.98 L960.30 489.98" fill="none" stroke="#8a8a8a" stroke-width="1.2"/><path d="M935.44 493.67 L960.30 493.67" fill="none" stroke="#000" stroke-width="1.5"/><path d="M935.44 489.98 L935.44 493.67" fill="none" stroke="#000" stroke-width="1.5"/><g transform="translate(958.93,492.03)"><path d="M8 -2 H15.4 V1.2 L14.3 3.2 L13.2 1.6 L12.1 3.2 L11 1.6 H8 Z" fill="#ffff00" stroke="#000" stroke-width="1"/><circle cx="4.7" cy="0" r="4.1" fill="#ffff00" stroke="#000" stroke-width="1.2"/><circle cx="3.4" cy="0" r="1.2" fill="#fff" stroke="#000" stroke-width="0.8"/></g></svg>
</div></body></html>
